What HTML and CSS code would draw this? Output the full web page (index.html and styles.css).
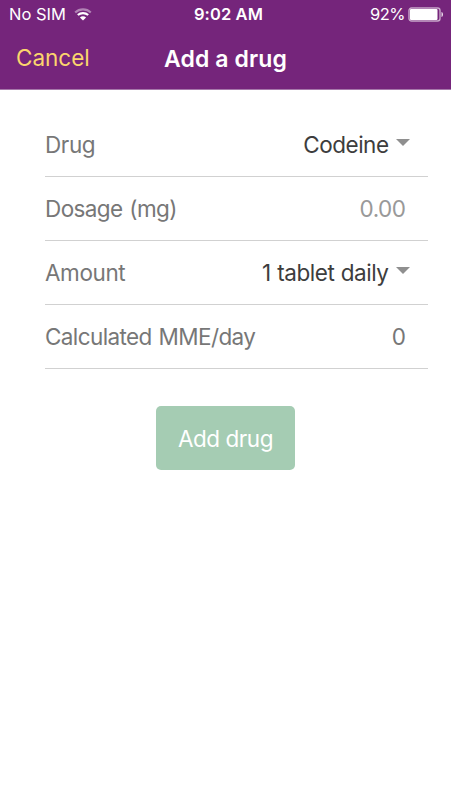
FILE: index.html
```
<!DOCTYPE html>
<html lang="en">
<head>
<meta charset="utf-8">
<title>Add a drug</title>
<link rel="stylesheet" href="styles.css">
</head>
<body>
<header class="header">
  <div class="status">
    <div class="status-left">
      <span class="carrier">No SIM</span>
      <svg class="wifi" width="18" height="13" viewBox="0 0 18 13" fill="none">
        <path d="M1.2 4.4C5.5.3 12.5.3 16.8 4.4" stroke="#b183b5" stroke-width="2.1"/>
        <path d="M3.8 7.1c2.9-2.7 7.5-2.7 10.4 0" stroke="#fff" stroke-width="2.1"/>
        <path d="M9 12.6 5.9 9.4c1.7-1.6 4.5-1.6 6.2 0z" fill="#fff"/>
      </svg>
    </div>
    <span class="clock">9:02 AM</span>
    <div class="status-right">
      <span class="percent">92%</span>
      <svg class="battery" width="36" height="15" viewBox="0 0 36 15">
        <rect x="1" y="1" width="31" height="13" rx="2.5" fill="none" stroke="#c8a7ca" stroke-width="1.4"/>
        <rect x="2" y="2" width="27.5" height="11" rx="1" fill="#fff"/>
        <path d="M33.5 5c2 .6 2 4.4 0 5z" fill="#ecdfed"/>
      </svg>
    </div>
  </div>
  <nav class="nav">
    <span class="cancel">Cancel</span>
    <span class="title">Add a drug</span>
  </nav>
</header>
<main class="form">
  <div class="row"><span class="label drug">Drug</span><span class="value codeine">Codeine</span><span class="arrow"></span></div>
  <div class="row"><span class="label dosage">Dosage (mg)</span><span class="number placeholder">0.00</span></div>
  <div class="row"><span class="label amount">Amount</span><span class="value tablet">1 tablet daily</span><span class="arrow"></span></div>
  <div class="row"><span class="label mme">Calculated MME/day</span><span class="number">0</span></div>
  <button class="submit" type="button">Add drug</button>
</main>
</body>
</html>
```
FILE: styles.css
```
* { box-sizing: border-box; }
body {
  margin: 0;
  background: #fff;
  font-family: Inter, Roboto, sans-serif;
  font-size: 22.5px;
  letter-spacing: -.5px;
  color: #777;
}
.header {
  height: 90px;
  background: #75257b;
  border-bottom: 1px solid #a678aa;
  color: #fff;
}
.status {
  display: grid;
  grid-template-columns: 1fr auto 1fr;
  align-items: center;
  height: 30px;
  padding: 0 7px 2px 9px;
  font-size: 16.5px;
  letter-spacing: 0;
  line-height: 28px;
}
.status-left, .status-right { display: flex; align-items: center; }
.status-right { justify-content: flex-end; gap: 3px; }
.carrier { width: 65px; white-space: nowrap; }
.percent { letter-spacing: -.5px; }
.clock { font-weight: 600; margin-left: 4px; letter-spacing: .1px; }
.nav {
  display: grid;
  grid-template-columns: 1fr auto 1fr;
  height: 56px;
  padding: 0 16px;
  line-height: 55px;
}
.cancel { color: #fbd56d; letter-spacing: 0; }
.title { font-size: 23px; font-weight: 600; letter-spacing: .1px; line-height: 58px; }
.form { padding: 23px 23px 0 45px; }
.row {
  display: flex;
  align-items: center;
  height: 64px;
  padding-bottom: 1px;
  border-bottom: 1px solid #d1d1d1;
}
.label { margin-right: auto; white-space: nowrap; }
.drug, .amount { letter-spacing: -.4px; }
.dosage { letter-spacing: -.6px; word-spacing: 1px; }
.mme { letter-spacing: -.6px; word-spacing: 1px; }
.value { color: #3d3d3d; white-space: nowrap; }
.tablet { letter-spacing: -.45px; word-spacing: .5px; }
.arrow {
  margin: -3px 18px 0 7.5px;
  border: 7px solid transparent;
  border-top-color: #8f8f8f;
  border-bottom: 0;
}
.number { margin-right: 22.5px; }
.placeholder { color: #999; }
.submit {
  display: block;
  width: 139px;
  height: 64px;
  margin: 37px 0 0 111px;
  padding: 0;
  border: 0;
  border-radius: 5px;
  background: #a5ccb3;
  color: #fff;
  font: inherit;
  letter-spacing: -.45px;
}
```
